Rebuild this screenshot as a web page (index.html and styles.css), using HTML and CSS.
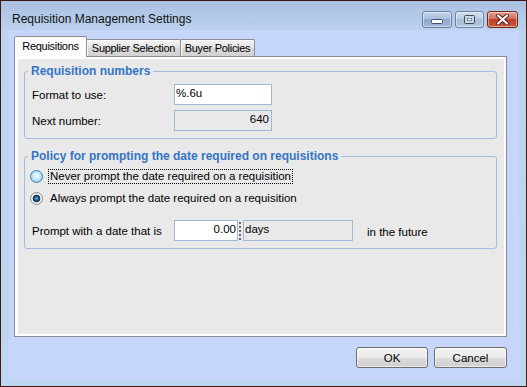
FILE: index.html
```html
<!DOCTYPE html>
<html lang="en">
<head>
    <meta charset="UTF-8">
    <title>Requisition Management Settings</title>
    <link rel="stylesheet" href="styles.css">
</head>
<body>

<div class="window">
    <div class="titlebar">
        <span class="title">Requisition Management Settings</span>
        <div class="caption">
            <span class="cap cap-min">
                <svg width="12" height="5" viewBox="0 0 12 5"><rect x="0.5" y="0.5" width="11" height="4" rx="1" fill="#fff" stroke="#3d4f6b"/></svg>
            </span>
            <span class="cap cap-max">
                <svg width="11" height="9" viewBox="0 0 11 9"><rect x="0.5" y="0.5" width="10" height="8" rx="1" fill="#c9d5e6" stroke="#3f4d61"/><rect x="3" y="3" width="5" height="3" fill="#3f4d61"/><rect x="3.5" y="3.5" width="4" height="2" fill="#e8eef6"/></svg>
            </span>
            <span class="cap cap-close">
                <svg width="13" height="11" viewBox="0 0 13 11"><path d="M2 1.5 L11 9.5 M11 1.5 L2 9.5" stroke="#5a1a10" stroke-width="4" stroke-linecap="round"/><path d="M2 1.5 L11 9.5 M11 1.5 L2 9.5" stroke="#fff" stroke-width="2.2" stroke-linecap="round"/></svg>
            </span>
        </div>
    </div>

    <div class="client">
        <div class="tabs">
            <span class="tab tab-req active">Requisitions</span>
            <span class="tab tab-sup">Supplier Selection</span>
            <span class="tab tab-buy">Buyer Policies</span>
        </div>

        <div class="panel">
            <div class="page">
                <fieldset class="group group-numbers">
                    <legend>Requisition numbers</legend>
                    <div class="row">
                        <span class="label">Format to use:</span>
                        <div class="field field-format">%.6u</div>
                    </div>
                    <div class="row">
                        <span class="label">Next number:</span>
                        <div class="field field-format ro num">640</div>
                    </div>
                </fieldset>

                <fieldset class="group group-policy">
                    <legend>Policy for prompting the date required on requisitions</legend>
                    <div class="radio-row">
                        <span class="radio"></span>
                        <span class="radio-label focus">Never prompt the date required on a requisition</span>
                    </div>
                    <div class="radio-row second">
                        <span class="radio checked"></span>
                        <span class="radio-label">Always prompt the date required on a requisition</span>
                    </div>
                    <div class="row prompt-row">
                        <span class="label">Prompt with a date that is</span>
                        <div class="field field-days num">0.00</div>
                        <span class="spin"></span>
                        <div class="field field-unit ro">days</div>
                        <span class="future">in the future</span>
                    </div>
                </fieldset>
            </div>
        </div>

        <div class="actions">
            <button class="btn btn-ok">OK</button>
            <button class="btn btn-cancel">Cancel</button>
        </div>
    </div>
</div>

</body>
</html>
```

FILE: styles.css
```css
body {
    margin: 0;
    font-family: "Liberation Sans", Arial, sans-serif;
    font-size: 11.5px;
    color: #000;
}

.window {
    width: 527px;
    height: 387px;
    box-sizing: border-box;
    border: 1px solid #3e1714;
    background: linear-gradient(#a9c1e0, #bcd2ee 30px, #bfd6f1);
    display: flex;
    flex-direction: column;
}

.titlebar {
    height: 29px;
    display: flex;
    align-items: flex-start;
    padding: 0 8px 0 11px;
}

.title {
    flex: 1;
    padding-top: 11px;
    line-height: 14px;
    font-size: 12px;
    color: #111;
}

.caption {
    display: flex;
    gap: 3px;
    margin-top: 10px;
}

.cap {
    height: 17px;
    box-sizing: border-box;
    border: 1px solid #6c82a3;
    border-radius: 3px;
    display: flex;
    align-items: center;
    justify-content: center;
    box-shadow: inset 0 0 0 1px rgba(255, 255, 255, 0.45);
}

.cap-min {
    width: 30px;
    background: linear-gradient(#c4d4ea, #a9bfdd 45%, #8ea9cf 50%, #9db6d8);
    align-items: flex-end;
    padding-bottom: 3px;
}

.cap-max {
    width: 29px;
    background: linear-gradient(#d3dfee, #bccde4 45%, #a8bcd9 50%, #b6c8e1);
}

.cap-close {
    width: 31px;
    border-color: #6b2a20;
    background: linear-gradient(#e3a093, #d0705d 45%, #bf3f28 50%, #c9583f);
}

.client {
    flex: 1;
    margin: 0 7px 6px 7px;
    background: #c6d5fa;
    padding: 6px 12px 12px 6px;
    display: flex;
    flex-direction: column;
}

.tabs {
    display: flex;
    align-items: flex-end;
    height: 20px;
}

.tab {
    height: 17px;
    box-sizing: border-box;
    line-height: 16px;
    font-size: 11px;
    letter-spacing: -0.3px;
    text-align: center;
    margin-left: -1px;
    border: 1px solid #8c8e94;
    border-bottom: 0;
    border-radius: 2px 2px 0 0;
    background: linear-gradient(#f3f3f3, #e6e6e6 45%, #d9d9d9 50%, #d2d2d2);
    box-shadow: inset 1px 1px 0 #fafafa;
}

.tab-req {
    width: 73px;
}

.tab-sup {
    width: 95px;
}

.tab-buy {
    width: 75px;
}

.tab.active {
    position: relative;
    z-index: 1;
    height: 21px;
    line-height: 19px;
    margin: 0 0 -1px 0;
    background: #fcfcfc;
    box-shadow: none;
}

.panel {
    flex: 1;
    display: flex;
    border: 1px solid #898c95;
    background: #fff;
    padding: 2px 2px 2px 3px;
}

.page {
    flex: 1;
    background: #e9e9e9;
    padding: 5px 7px 0 6px;
}

.group {
    margin: 0;
    border: 1px solid #a3bddf;
    border-radius: 3px;
    padding: 6px 8px 7px 7px;
}

.group legend {
    color: #3574c4;
    font-weight: bold;
    font-size: 12px;
    line-height: 14px;
    padding: 0 3px;
    margin-left: -4px;
}

.group-policy {
    margin-top: 10px;
}

.row {
    display: flex;
    align-items: center;
    height: 21px;
}

.row + .row {
    margin-top: 5px;
}

.label {
    width: 142px;
    flex-shrink: 0;
}

.field {
    height: 21px;
    box-sizing: border-box;
    border: 1px solid #a0b8d8;
    background: #fff;
    line-height: 17px;
    padding: 0 2px 0 1px;
}

.field.ro {
    background: #e9e9e9;
}

.field.num {
    text-align: right;
}

.field-format {
    width: 98px;
}

.field-days {
    width: 64px;
    padding-right: 1px;
}

.spin {
    width: 2px;
    height: 18px;
    margin: 0 2px 0 1px;
    background: repeating-linear-gradient(#6a6a6a 0 2px, transparent 2px 4px);
}

.field-unit {
    width: 110px;
}

.future {
    margin-left: 14px;
    padding-top: 3px;
}

.radio-row {
    display: flex;
    align-items: center;
    height: 15px;
}

.radio-row.second {
    margin-top: 7px;
}

.prompt-row {
    margin-top: 14px;
}

.radio {
    width: 13px;
    height: 13px;
    box-sizing: border-box;
    border-radius: 50%;
    margin-left: -2px;
    border: 1px solid #3f7fb4;
    background: radial-gradient(circle at 50% 45%, #eefaff 0, #cfeefc 35%, #9fd3ef 75%, #b9e1f5);
}

.radio.checked {
    border-color: #8c8f92;
    background: radial-gradient(circle, #5fb0e6 0, #1f5e8e 2px, #0e2f4c 3.5px, #f4f4f4 4.2px, #dcdcdc);
}

.radio-label {
    margin-left: 5px;
    padding: 0 1px;
    border: 1px solid transparent;
    line-height: 13px;
}

.radio-label.focus {
    border: 1px dotted #000;
}

.actions {
    display: flex;
    justify-content: flex-end;
    gap: 6px;
    margin-top: 10px;
}

.btn {
    height: 21px;
    padding: 0;
    font: inherit;
    color: #000;
    border: 1px solid #707070;
    border-radius: 3px;
    background: linear-gradient(#f2f2f2, #ebebeb 50%, #dddddd 50%, #cfcfcf);
    box-shadow: inset 0 0 0 1px rgba(255, 255, 255, 0.6);
}

.btn-ok {
    width: 72px;
}

.btn-cancel {
    width: 73px;
}
```
